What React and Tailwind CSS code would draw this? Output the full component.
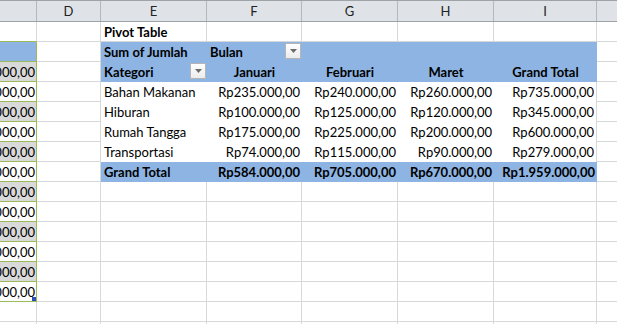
import React from 'react';

const GRID = 'border-r border-b border-[#d6d8da] bg-white';
const BLUE = 'bg-[#8db4e2]';

function Dropdown() {
  return (
    <div className="absolute right-[1px] top-[1px] w-[16px] h-[16px] border border-[#b5b5b5] bg-linear-to-b from-white to-[#ececec] flex items-center justify-center">
      <svg width="7" height="4" viewBox="0 0 7 4">
        <path d="M0 0h7L3.5 4z" fill="#6b6b6b" />
      </svg>
    </div>
  );
}

function C({ kind, text, handle }) {
  const bg = kind === 'blue' ? 'bg-[#8db4e2]' : kind === 'gray' ? 'bg-[#d9d9d9]' : 'bg-white';
  return (
    <div className={`w-[37px] shrink-0 h-[20px] relative border-r border-b border-[#9bbb59] ${bg} flex justify-end items-center overflow-hidden pr-[1px]`}>
      {text && <span className="shrink-0 whitespace-nowrap">{text}</span>}
      {handle && <div className="absolute right-0 bottom-0 w-[4px] h-[4px] bg-[#2f4fb8]" />}
    </div>
  );
}

function Cells({ e, f, g, h, i, cls = GRID, eCls = '', iCls = '' }) {
  return (
    <>
      <div className={`w-[106px] shrink-0 h-[20px] relative flex items-center ${cls} ${eCls}`}>{e}</div>
      <div className={`w-[95px] shrink-0 h-[20px] relative flex items-center ${cls}`}>{f}</div>
      <div className={`w-[96px] shrink-0 h-[20px] relative flex items-center ${cls}`}>{g}</div>
      <div className={`w-[96px] shrink-0 h-[20px] relative flex items-center ${cls}`}>{h}</div>
      <div className={`w-[103px] shrink-0 h-[20px] relative flex items-center ${cls} ${iCls}`}>{i}</div>
    </>
  );
}

const D = () => <div className={`w-[64px] shrink-0 h-[20px] ${GRID}`} />;
const J = () => <div className="flex-1 h-[20px] border-b border-[#d6d8da] bg-white" />;
const L = ({ children, b }) => (
  <span className={`pl-[3px] whitespace-nowrap ${b ? 'font-bold' : ''}`}>{children}</span>
);
const R = ({ children, b }) => (
  <span className={`ml-auto pr-[2px] whitespace-nowrap ${b ? 'font-bold' : ''}`}>{children}</span>
);
const M = ({ children }) => (
  <span className="mx-auto whitespace-nowrap font-bold">{children}</span>
);

const data = [
  ['Bahan Makanan', 'Rp235.000,00', 'Rp240.000,00', 'Rp260.000,00', 'Rp735.000,00'],
  ['Hiburan', 'Rp100.000,00', 'Rp125.000,00', 'Rp120.000,00', 'Rp345.000,00'],
  ['Rumah Tangga', 'Rp175.000,00', 'Rp225.000,00', 'Rp200.000,00', 'Rp600.000,00'],
  ['Transportasi', 'Rp74.000,00', 'Rp115.000,00', 'Rp90.000,00', 'Rp279.000,00'],
];

const cVals = [
  'Rp100.000,00', 'Rp200.000,00', 'Rp150.000,00', 'Rp300.000,00', 'Rp125.000,00',
  'Rp200.000,00', 'Rp175.000,00', 'Rp190.000,00', 'Rp220.000,00', 'Rp180.000,00',
  'Rp160.000,00', 'Rp140.000,00',
];

function Header() {
  const H = ({ w, children }) => (
    <div className={`${w} shrink-0 h-[20px] border-r border-[#b3b8bd] flex items-center justify-center`}>{children}</div>
  );
  return (
    <div className="flex h-[22px] bg-[#dfe3e8] border-t border-b border-[#9ea3a8] text-[#222]">
      <H w="w-[37px]" />
      <H w="w-[64px]">D</H>
      <H w="w-[106px]">E</H>
      <H w="w-[95px]">F</H>
      <H w="w-[96px]">G</H>
      <H w="w-[96px]">H</H>
      <H w="w-[103px]">I</H>
      <div className="flex-1" />
    </div>
  );
}

export default function App() {
  return (
    <div className="w-[617px] h-[324px] overflow-hidden bg-white text-black text-[13px] leading-[20px] font-['Lato',sans-serif]">
      <Header />
      {/* row 1 */}
      <div className="flex h-[20px]">
        <div className="w-[37px] shrink-0 h-[20px] border-r border-b border-r-[#d6d8da] border-b-[#9bbb59] bg-white" />
        <D />
        <Cells e={<L b>Pivot Table</L>} />
        <J />
      </div>
      {/* row 2 */}
      <div className="flex h-[20px]">
        <C kind="blue" />
        <D />
        <Cells
          cls={BLUE}
          e={<L b>Sum of Jumlah</L>}
          f={<><L b>Bulan</L><Dropdown /></>}
        />
        <J />
      </div>
      {/* row 3 */}
      <div className="flex h-[20px]">
        <C kind="gray" text={cVals[0]} />
        <D />
        <Cells
          cls={BLUE}
          e={<><L b>Kategori</L><Dropdown /></>}
          f={<M>Januari</M>}
          g={<M>Februari</M>}
          h={<M>Maret</M>}
          i={<M>Grand Total</M>}
        />
        <J />
      </div>
      {data.map((r, idx) => (
        <div className="flex h-[20px]" key={r[0]}>
          <C kind={idx % 2 === 0 ? 'white' : 'gray'} text={cVals[idx + 1]} />
          <D />
          <Cells
            cls="bg-white"
            iCls="border-r border-[#d6d8da]"
            e={<L>{r[0]}</L>}
            f={<R>{r[1]}</R>}
            g={<R>{r[2]}</R>}
            h={<R>{r[3]}</R>}
            i={<R>{r[4]}</R>}
          />
          <J />
        </div>
      ))}
      {/* grand total */}
      <div className="flex h-[20px]">
        <C kind="white" text={cVals[5]} />
        <D />
        <Cells
          cls={BLUE}
          e={<L b>Grand Total</L>}
          f={<R b>Rp584.000,00</R>}
          g={<R b>Rp705.000,00</R>}
          h={<R b>Rp670.000,00</R>}
          i={<R b>Rp1.959.000,00</R>}
        />
        <J />
      </div>
      {[6, 7, 8, 9, 10, 11].map((k) => (
        <div className="flex h-[20px]" key={k}>
          <C kind={k % 2 === 0 ? 'gray' : 'white'} text={cVals[k]} handle={k === 11} />
          <D />
          <Cells />
          <J />
        </div>
      ))}
      {[0, 1].map((k) => (
        <div className="flex h-[20px]" key={'e' + k}>
          <div className={`w-[37px] shrink-0 h-[20px] ${GRID}`} />
          <D />
          <Cells />
          <J />
        </div>
      ))}
    </div>
  );
}
